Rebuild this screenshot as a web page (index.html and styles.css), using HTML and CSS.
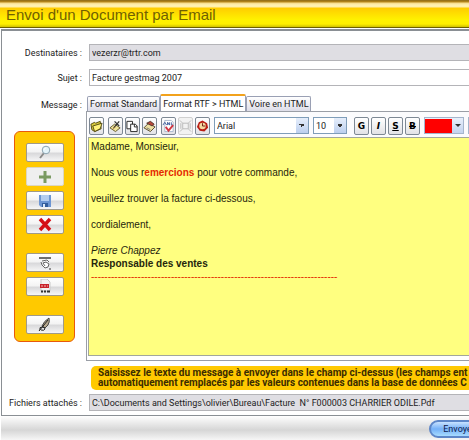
FILE: index.html
```html
<!DOCTYPE html>
<html lang="fr">
<head>
  <meta charset="UTF-8">
  <title>Envoi d'un Document par Email</title>
  <link rel="stylesheet" href="styles.css">
</head>
<body>
  <header class="title-bar">
    <h1>Envoi d'un Document par Email</h1>
  </header>

  <main class="panel">
    <div class="row">
      <label for="dest">Destinataires :</label>
      <input type="text" id="dest" class="field locked" value="vezerzr@trtr.com" readonly>
    </div>
    <div class="row">
      <label for="sujet">Sujet :</label>
      <input type="text" id="sujet" class="field" value="Facture gestmag 2007">
    </div>

    <div class="message">
      <div class="side">
        <span class="side-label" id="msgLabel">Message :</span>
        <div class="actions">
          <button type="button" aria-label="Aperçu">
            <svg width="16" height="15" viewBox="0 0 16 15"><path d="M7 8L3 13" stroke="#8a8a8a" stroke-width="2"/><circle cx="9" cy="5" r="3.8" fill="#e4f4fa" stroke="#8ba3b0"/><path d="M7 5q0-2 2-2" stroke="#fff" fill="none"/></svg>
          </button>
          <button type="button" aria-label="Ajouter" class="off">
            <svg width="16" height="15" viewBox="0 0 16 15"><path d="M8 2v12M2 8h12" stroke="#7a9a62" stroke-width="3"/></svg>
          </button>
          <button type="button" aria-label="Enregistrer">
            <svg width="16" height="15" viewBox="0 0 16 15"><path d="M2 2h12v12H4l-2-2z" fill="#6c95d2"/><path d="M4 2h8v6H4z" fill="#b3cdf0"/><path d="M5 10h6v4H5z" fill="#315c9c"/><path d="M6 11h2v3H6z" fill="#dce8f8"/></svg>
          </button>
          <button type="button" aria-label="Supprimer">
            <svg width="16" height="15" viewBox="0 0 16 15"><path d="M3 2l10 11M13 2L3 13" stroke="#d40f16" stroke-width="3.4"/></svg>
          </button>
          <button type="button" aria-label="Numériser" class="apart">
            <svg width="16" height="15" viewBox="0 0 16 15"><path d="M2 3h12" stroke="#333" stroke-width="1.4"/><path d="M5 6l5-1 2 2M4 7l1 3 3 3 3-1 1-3-3-2-3 1 2 3" fill="#fff" stroke="#666"/><path d="M12 14h2" stroke="#333"/></svg>
          </button>
          <button type="button" aria-label="Exporter en PDF">
            <svg width="16" height="15" viewBox="0 0 16 15"><path d="M4 0h6l3 3v9H4z" fill="#f4f4f4" stroke="#c9c9c9"/><path d="M3 5h9v4H3z" fill="#c8242b"/><path d="M4 7h7" stroke="#f3b6b6" stroke-dasharray="2 1"/><path d="M4 12.500h2m1 0h2m1 0h3" stroke="#333" stroke-width="2"/></svg>
          </button>
          <button type="button" aria-label="Signer" class="apart">
            <svg width="16" height="15" viewBox="0 0 16 15"><path d="M5 9q2-5 7-8q1 4-1 7l-3 3z" fill="#b5a78d" stroke="#444"/><path d="M2 14L11 3M3 13q-1-3 2-3q3 0 3 2q-1 2-4 1" stroke="#222" fill="none"/></svg>
          </button>
        </div>
      </div>

      <div class="editor">
        <div class="tabs" role="tablist">
          <button type="button" role="tab" class="tab">Format Standard</button>
          <button type="button" role="tab" class="tab active" aria-selected="true">Format RTF &gt; HTML</button>
          <button type="button" role="tab" class="tab">Voire en HTML</button>
        </div>
        <div class="editor-box">
          <div class="toolbar">
            <div class="group">
              <button type="button" class="tool" aria-label="Ouvrir">
                <svg width="14" height="14" viewBox="0 0 14 14"><path d="M1 5l4-2 1 1 5-2 1 8-7 3-3-2z" fill="#d8c93a" stroke="#51480f"/><path d="M3 7l10-3-2 6-6 3z" fill="#fff27a" stroke="#51480f"/></svg>
              </button>
            </div>
            <div class="group">
              <button type="button" class="tool" aria-label="Couper">
                <svg width="14" height="14" viewBox="0 0 14 14"><path d="M1 9l5-4 6 4-5 4z" fill="#efe49a" stroke="#62572a"/><path d="M5 9l6-7M6 2l5 5" stroke="#333" stroke-width="1.300"/><path d="M4 10l3-2" stroke="#9b6b28"/></svg>
              </button>
              <button type="button" class="tool" aria-label="Copier">
                <svg width="14" height="14" viewBox="0 0 14 14"><path d="M1 2h6v8H1z" fill="#fff" stroke="#222"/><path d="M5 5h5l2 2v6H5z" fill="#fff" stroke="#222"/><path d="M9 5v3h3" fill="none" stroke="#222"/></svg>
              </button>
              <button type="button" class="tool" aria-label="Coller">
                <svg width="14" height="14" viewBox="0 0 14 14"><path d="M1 9l5-5 7 4-5 5z" fill="#eee1a2" stroke="#51452b"/><path d="M4 4l4-2 4 3-2 2z" fill="#b9483b" stroke="#51352b"/><path d="M4 9l4 2" stroke="#777"/></svg>
              </button>
            </div>
            <div class="group">
              <button type="button" class="tool" aria-label="Orthographe">
                <svg width="14" height="14" viewBox="0 0 14 14"><path d="M3 1h7l2 2v10H3z" fill="#fff" stroke="#a8b5cb"/><path d="M1 6l2-3 2 3m1 0V3l2 3V3m2 0v3h2" stroke="#3e5c9a" fill="none"/><path d="M4 8l3 4 5-6" stroke="#d23743" stroke-width="2" fill="none"/></svg>
              </button>
              <button type="button" class="tool off" aria-label="Cadre">
                <svg width="14" height="14" viewBox="0 0 14 14"><path d="M4 4h6v6H4zM1 1l3 3M13 1l-3 3M1 13l3-3M13 13l-3-3M2 4v6M12 4v6" fill="none" stroke="#b8b8b8"/></svg>
              </button>
              <button type="button" class="tool" aria-label="Date et heure">
                <svg width="14" height="14" viewBox="0 0 14 14"><path d="M3 3l4-2 5 3 1 5-4 4-5-1-3-4z" fill="#b91d14"/><circle cx="7" cy="7" r="3.500" fill="#f6d9a0"/><path d="M7 4v3h3" stroke="#6a1a0f" fill="none"/></svg>
              </button>
            </div>
            <select class="font-name" aria-label="Police"><option>Arial</option></select>
            <select class="font-size" aria-label="Taille"><option>10</option></select>
            <div class="group styles">
              <button type="button" class="tool letter" aria-label="Gras">G</button>
              <button type="button" class="tool letter" aria-label="Italique"><i>I</i></button>
              <button type="button" class="tool letter" aria-label="Souligné"><u>S</u></button>
              <button type="button" class="tool letter" aria-label="Barré"><s>B</s></button>
            </div>
            <button type="button" class="color" aria-label="Couleur du texte"><span class="swatch"></span><span class="arrow"></span></button>
            <span class="end-line"></span>
          </div>
          <div class="text" contenteditable="true" role="textbox" aria-multiline="true" aria-labelledby="msgLabel">
            <p>Madame, Monsieur,</p>
            <p>Nous vous r<b class="red">emercions</b> pour votre commande,</p>
            <p>veuillez trouver la facture ci-dessous,</p>
            <p>cordialement,</p>
            <p><i>Pierre Chappez</i><br><b>Responsable des ventes</b><br><span class="red">--------------------------------------------------------------------------</span></p>
          </div>
        </div>
        <p class="hint">Saisissez le texte du message à envoyer dans le champ ci-dessus (les champs ent<br>automatiquement remplacés par les valeurs contenues dans la base de données C</p>
      </div>
    </div>

    <div class="row files">
      <label for="fichiers">Fichiers attachés :</label>
      <input type="text" id="fichiers" class="field locked" value="C:\Documents and Settings\olivier\Bureau\Facture  N° F000003 CHARRIER ODILE.Pdf" readonly>
    </div>
  </main>

  <footer class="bottom-bar">
    <button type="button" class="send">Envoyer</button>
  </footer>
</body>
</html>
```
FILE: styles.css
```css
* {
  box-sizing: border-box;
}

body {
  margin: 0;
  min-height: 100vh;
  display: flex;
  flex-direction: column;
  overflow: hidden;
  background: #fff;
  color: #222;
  font-family: Roboto, Arial, sans-serif;
  font-size: 9px;
}

button, input, select {
  font: inherit;
  color: inherit;
  margin: 0;
  padding: 0;
}

svg {
  display: block;
  fill: none;
}

/* Title */
.title-bar {
  height: 28px;
  padding: 4px 6px 0;
  border-bottom: 1px solid #6d6000;
  background: linear-gradient(#8b6a18 0, #b98a1c 2px, #f7dc8a 3px, #fff3b4 5px, #fff0a8 7px, #ffcd00 8px, #ffe000 14px, #fff200 20px, #fff000 24px, #cfc000 27px);
}

.title-bar h1 {
  margin: 0;
  font-family: "Liberation Sans", Arial, sans-serif;
  font-size: 15px;
  line-height: 21px;
  font-weight: normal;
  color: #716000;
  white-space: nowrap;
}

/* Form */
.panel {
  margin: 1px 0 0 1px;
  padding: 13px 0 4px;
  border: solid #8a8f94;
  border-width: 2px 0 1px 1px;
}

.row {
  display: flex;
  align-items: center;
  margin-bottom: 8px;
}

.row label {
  flex: none;
  width: 87px;
  padding-right: 7px;
  text-align: right;
  white-space: nowrap;
}

.field {
  flex: 1;
  min-width: 0;
  height: 17px;
  padding-left: 2px;
  border: 1px solid #b4b4b8;
  border-right: 0;
  background: #fff;
}

.locked {
  background: #dfdee3;
}

.files {
  margin: 4px 0 0;
}

.message {
  display: flex;
}

/* Left column of buttons */
.side {
  flex: none;
  width: 84px;
  padding-top: 5px;
}

.side-label {
  display: block;
  padding-right: 4px;
  line-height: 12px;
  text-align: right;
}

.actions {
  display: flex;
  flex-direction: column;
  align-items: center;
  gap: 5px;
  width: 61px;
  margin: 20px 0 0 12px;
  padding: 11px 0 7px;
  border: 1px solid #e8590c;
  border-radius: 6px;
  background: #ffc900;
}

.actions button {
  display: flex;
  align-items: center;
  justify-content: center;
  width: 38px;
  height: 19px;
  border: 1px solid #a09a88;
  border-radius: 2px;
  background: linear-gradient(#fff 0, #f4f4f4 45%, #d9d9db 55%, #f6f6f6);
}

.actions .off {
  border-color: #dcd6c0;
  background: #efefef;
}

.actions .apart {
  margin-top: 14px;
}

/* Tabs */
.editor {
  flex: 1;
  min-width: 0;
}

.tabs {
  display: flex;
  align-items: flex-end;
  height: 17px;
  padding-left: 1px;
}

.tab {
  height: 15px;
  padding: 0 2px;
  border: 1px solid #9aa0b4;
  border-bottom: 0;
  border-radius: 2px 2px 0 0;
  background: linear-gradient(#fff, #dddde8);
  white-space: nowrap;
}

.tab.active {
  height: 17px;
  border-top: 2px solid #f2a21c;
  background: #fff;
}

.editor-box {
  padding: 0 0 4px 1px;
  border: solid #9a9ea6;
  border-width: 1px 0 1px 1px;
}

/* Toolbar */
.toolbar {
  display: flex;
  align-items: center;
  gap: 4px;
  height: 25px;
  padding: 2px 0 0 1px;
  background: #fbfbfd;
}

.group {
  display: flex;
  flex: none;
  gap: 2px;
}

.tool {
  display: flex;
  align-items: center;
  justify-content: center;
  width: 15px;
  height: 18px;
  border: 1px solid #7d8894;
  border-radius: 2px;
  background: linear-gradient(#fff, #e2e2e6);
}

.tool.off {
  border-color: #d0d0d0;
  background: #f2f2f2;
}

.letter {
  font-size: 9px;
  font-weight: bold;
  font-family: "DejaVu Sans", sans-serif;
  color: #000;
}

.font-name, .font-size {
  flex: none;
  height: 17px;
  padding-left: 2px;
  border: 1px solid #7f9db9;
  border-radius: 0;
  appearance: none;
  background:
    linear-gradient(45deg, transparent 50%, #333 50%) right 6px center / 3px 3px no-repeat,
    linear-gradient(-45deg, transparent 50%, #333 50%) right 3px center / 3px 3px no-repeat,
    linear-gradient(#e6eefb, #bccfee) right center / 12px 15px no-repeat,
    #fff;
}

.font-name {
  width: 95px;
}

.font-size {
  width: 34px;
}

.styles {
  margin-left: 3px;
}

.color {
  display: flex;
  flex: none;
  align-items: center;
  width: 40px;
  height: 17px;
  border: 1px solid #a5b5cc;
  background: linear-gradient(#e9f0fb, #c3d3ee);
}

.swatch {
  width: 27px;
  height: 14px;
  background: #f00;
}

.arrow {
  margin-left: 3px;
  border: solid transparent;
  border-width: 3px 3px 0;
  border-top-color: #333;
}

.end-line {
  width: 1px;
  height: 17px;
  background: #a5b5cc;
}

/* Message text */
.text {
  min-height: 219px;
  padding: 2px 0 0 2px;
  border: 1px solid #a2a79c;
  border-right: 0;
  background: #ffff80;
  font-family: "Liberation Sans", Arial, sans-serif;
  font-size: 10px;
  line-height: 13px;
  color: #26260c;
}

.text p {
  margin: 0 0 13px;
}

.red {
  color: #e42a00;
}

.hint {
  margin: 5px 0 0 5px;
  padding: 2px 0 2px 7px;
  border-radius: 5px 0 0 5px;
  background: #ffc900;
  color: #3b2c00;
  font-size: 10px;
  font-weight: bold;
  line-height: 10px;
  white-space: nowrap;
  overflow: hidden;
}

/* Footer */
.bottom-bar {
  flex: 1;
  display: flex;
  justify-content: flex-end;
  align-items: flex-start;
  margin-left: 1px;
  padding-top: 4px;
  background: linear-gradient(#fff, #d6d6d6 14px, #f6f6f6);
}

.send {
  flex: none;
  width: 60px;
  height: 18px;
  margin-right: -20px;
  border: 2px solid #5d86c8;
  border-radius: 9px;
  background: linear-gradient(#c8e2ff, #74b0f8 50%, #a8dcff);
  color: #10204a;
}
```
